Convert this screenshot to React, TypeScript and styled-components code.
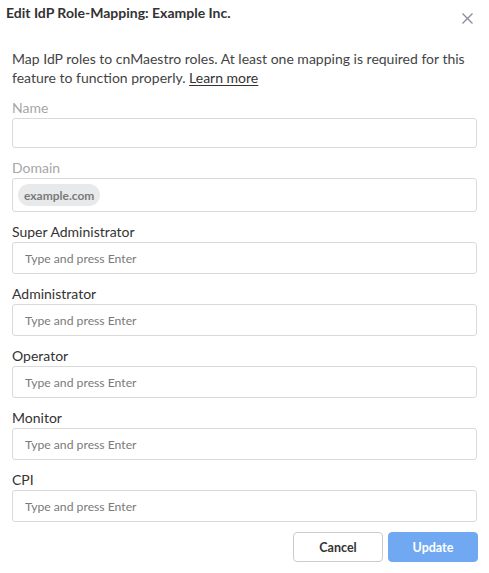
import React, { FC } from 'react';
import styled, { createGlobalStyle } from 'styled-components';

const GlobalStyle = createGlobalStyle`
  html, body {
    margin: 0;
    padding: 0;
    background: #ffffff;
  }
  body {
    font-family: Lato, "Open Sans", sans-serif;
    color: #333;
  }
  * {
    box-sizing: border-box;
  }
`;

const Modal = styled.div`
  width: 489px;
  height: 573px;
  display: flex;
  flex-direction: column;
  background: #ffffff;
`;

const Header = styled.div`
  display: flex;
  align-items: flex-start;
  justify-content: space-between;
  padding: 3px 15px 0 6px;
  height: 40px;
`;

const Title = styled.h1`
  margin: 0;
  font-size: 14px;
  line-height: 20px;
  font-weight: 700;
  color: #333;
`;

const CloseButton = styled.button`
  border: none;
  background: none;
  padding: 0;
  margin-top: 8px;
  width: 14px;
  height: 14px;
  display: flex;
  align-items: center;
  justify-content: center;
  cursor: pointer;
`;

const Body = styled.div`
  display: flex;
  flex-direction: column;
  padding: 0 12px;
  flex: 1 1 auto;
`;

const Intro = styled.p`
  margin: 0 0 11px 0;
  font-size: 14px;
  line-height: 19px;
  color: #444;
  padding-top: 9px;
`;

const LearnMore = styled.a`
  color: #333;
  text-decoration: underline;
  text-underline-offset: 2px;
`;

const Field = styled.div`
  display: flex;
  flex-direction: column;
  margin-bottom: 10px;
`;

const Label = styled.label<{ disabled?: boolean }>`
  font-size: 14px;
  line-height: 19px;
  margin-bottom: 1px;
  color: ${p => (p.disabled ? '#a6a6a6' : '#333')};
`;

const Box = styled.div<{ height: number }>`
  height: ${p => p.height}px;
  border: 1px solid #d9d9d9;
  border-radius: 3px;
  display: flex;
  align-items: center;
  padding: 0 5px;
`;

const Input = styled.input`
  border: none;
  outline: none;
  width: 100%;
  padding: 0 7px;
  font-family: inherit;
  font-size: 12.2px;
  color: #333;
  background: transparent;
  &::placeholder {
    color: #7a7a7a;
  }
`;

const Chip = styled.span`
  display: inline-flex;
  align-items: center;
  height: 22px;
  padding: 0 6px;
  border-radius: 11px;
  background: #e8e9eb;
  color: #7a7a7a;
  font-size: 12px;
  font-weight: 700;
`;

const Footer = styled.div`
  display: flex;
  justify-content: flex-end;
  gap: 5px;
  margin-right: -1px;
`;

const Button = styled.button<{ primary?: boolean }>`
  width: 90px;
  height: 30px;
  border-radius: 4px;
  font-family: inherit;
  font-size: 12.5px;
  font-weight: 700;
  cursor: pointer;
  border: 1px solid ${p => (p.primary ? '#70a9f1' : '#cccccc')};
  background: ${p => (p.primary ? '#70a9f1' : '#ffffff')};
  color: ${p => (p.primary ? '#ffffff' : '#333')};
`;

const roles = ['Super Administrator', 'Administrator', 'Operator', 'Monitor', 'CPI'];

const CloseIcon: FC = () => (
  <svg width="11" height="11" viewBox="0 0 11 11">
    <path d="M0.5 0.5 L10.5 10.5 M10.5 0.5 L0.5 10.5" stroke="#8a9099" strokeWidth="1.4" />
  </svg>
);

const App: FC = () => (
  <>
    <GlobalStyle />
    <Modal>
      <Header>
        <Title>Edit IdP Role-Mapping: Example Inc.</Title>
        <CloseButton aria-label="Close">
          <CloseIcon />
        </CloseButton>
      </Header>
      <Body>
        <Intro>
          Map IdP roles to cnMaestro roles. At least one mapping is required for this feature
          to function properly. <LearnMore href="#">Learn more</LearnMore>
        </Intro>
        <Field>
          <Label disabled>Name</Label>
          <Box height={30} />
        </Field>
        <Field>
          <Label disabled>Domain</Label>
          <Box height={34}>
            <Chip>example.com</Chip>
          </Box>
        </Field>
        {roles.map(role => (
          <Field key={role}>
            <Label>{role}</Label>
            <Box height={32}>
              <Input placeholder="Type and press Enter" />
            </Box>
          </Field>
        ))}
        <Footer>
          <Button>Cancel</Button>
          <Button primary>Update</Button>
        </Footer>
      </Body>
    </Modal>
  </>
);

export default App;
